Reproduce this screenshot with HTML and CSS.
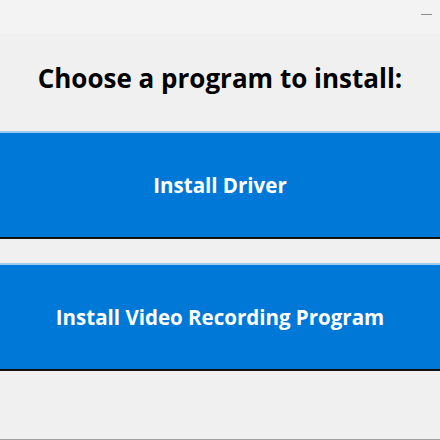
FILE: index.html
```html
<!DOCTYPE html>
<html>
<head>
<meta charset="utf-8">
<link rel="stylesheet" href="styles.css">
</head>
<body>
<div class="titlebar"><span class="min"></span></div>
<div class="content">
  <h1 class="title">Choose a program to install:</h1>
  <div class="buttons">
    <button class="btn">Install Driver</button>
    <button class="btn">Install Video Recording Program</button>
  </div>
</div>
<div class="bottomline"></div>
</body>
</html>
```
FILE: styles.css
```css
html, body {
  margin: 0;
  padding: 0;
}
body {
  width: 440px;
  height: 440px;
  background: #f0f0f0;
  font-family: "Open Sans", "Noto Sans", sans-serif;
  display: flex;
  flex-direction: column;
  overflow: hidden;
}
.titlebar {
  height: 33px;
  background: #f3f3f3;
  display: flex;
  justify-content: flex-end;
  align-items: flex-start;
  flex-shrink: 0;
}
.min {
  width: 11px;
  height: 1px;
  background: #8a8a8a;
  margin-top: 14px;
  margin-right: 8px;
}
.content {
  flex: 1;
  display: flex;
  flex-direction: column;
}
.title {
  margin: 28px 0 0 0;
  height: 70px;
  font-size: 26px;
  font-weight: 700;
  color: #000;
  text-align: center;
  line-height: 34px;
}
.buttons {
  display: flex;
  flex-direction: column;
  gap: 24px;
}
.btn {
  height: 108px;
  width: 100%;
  border: none;
  border-top: 2px solid #9ccaf0;
  border-bottom: 2px solid #111;
  background: #0078d7;
  color: #fff;
  font-family: "Open Sans", "Noto Sans", sans-serif;
  font-size: 20.5px;
  font-weight: 700;
  padding: 0;
}
.bottomline {
  height: 1px;
  background: #a0a0a0;
  flex-shrink: 0;
}
```
